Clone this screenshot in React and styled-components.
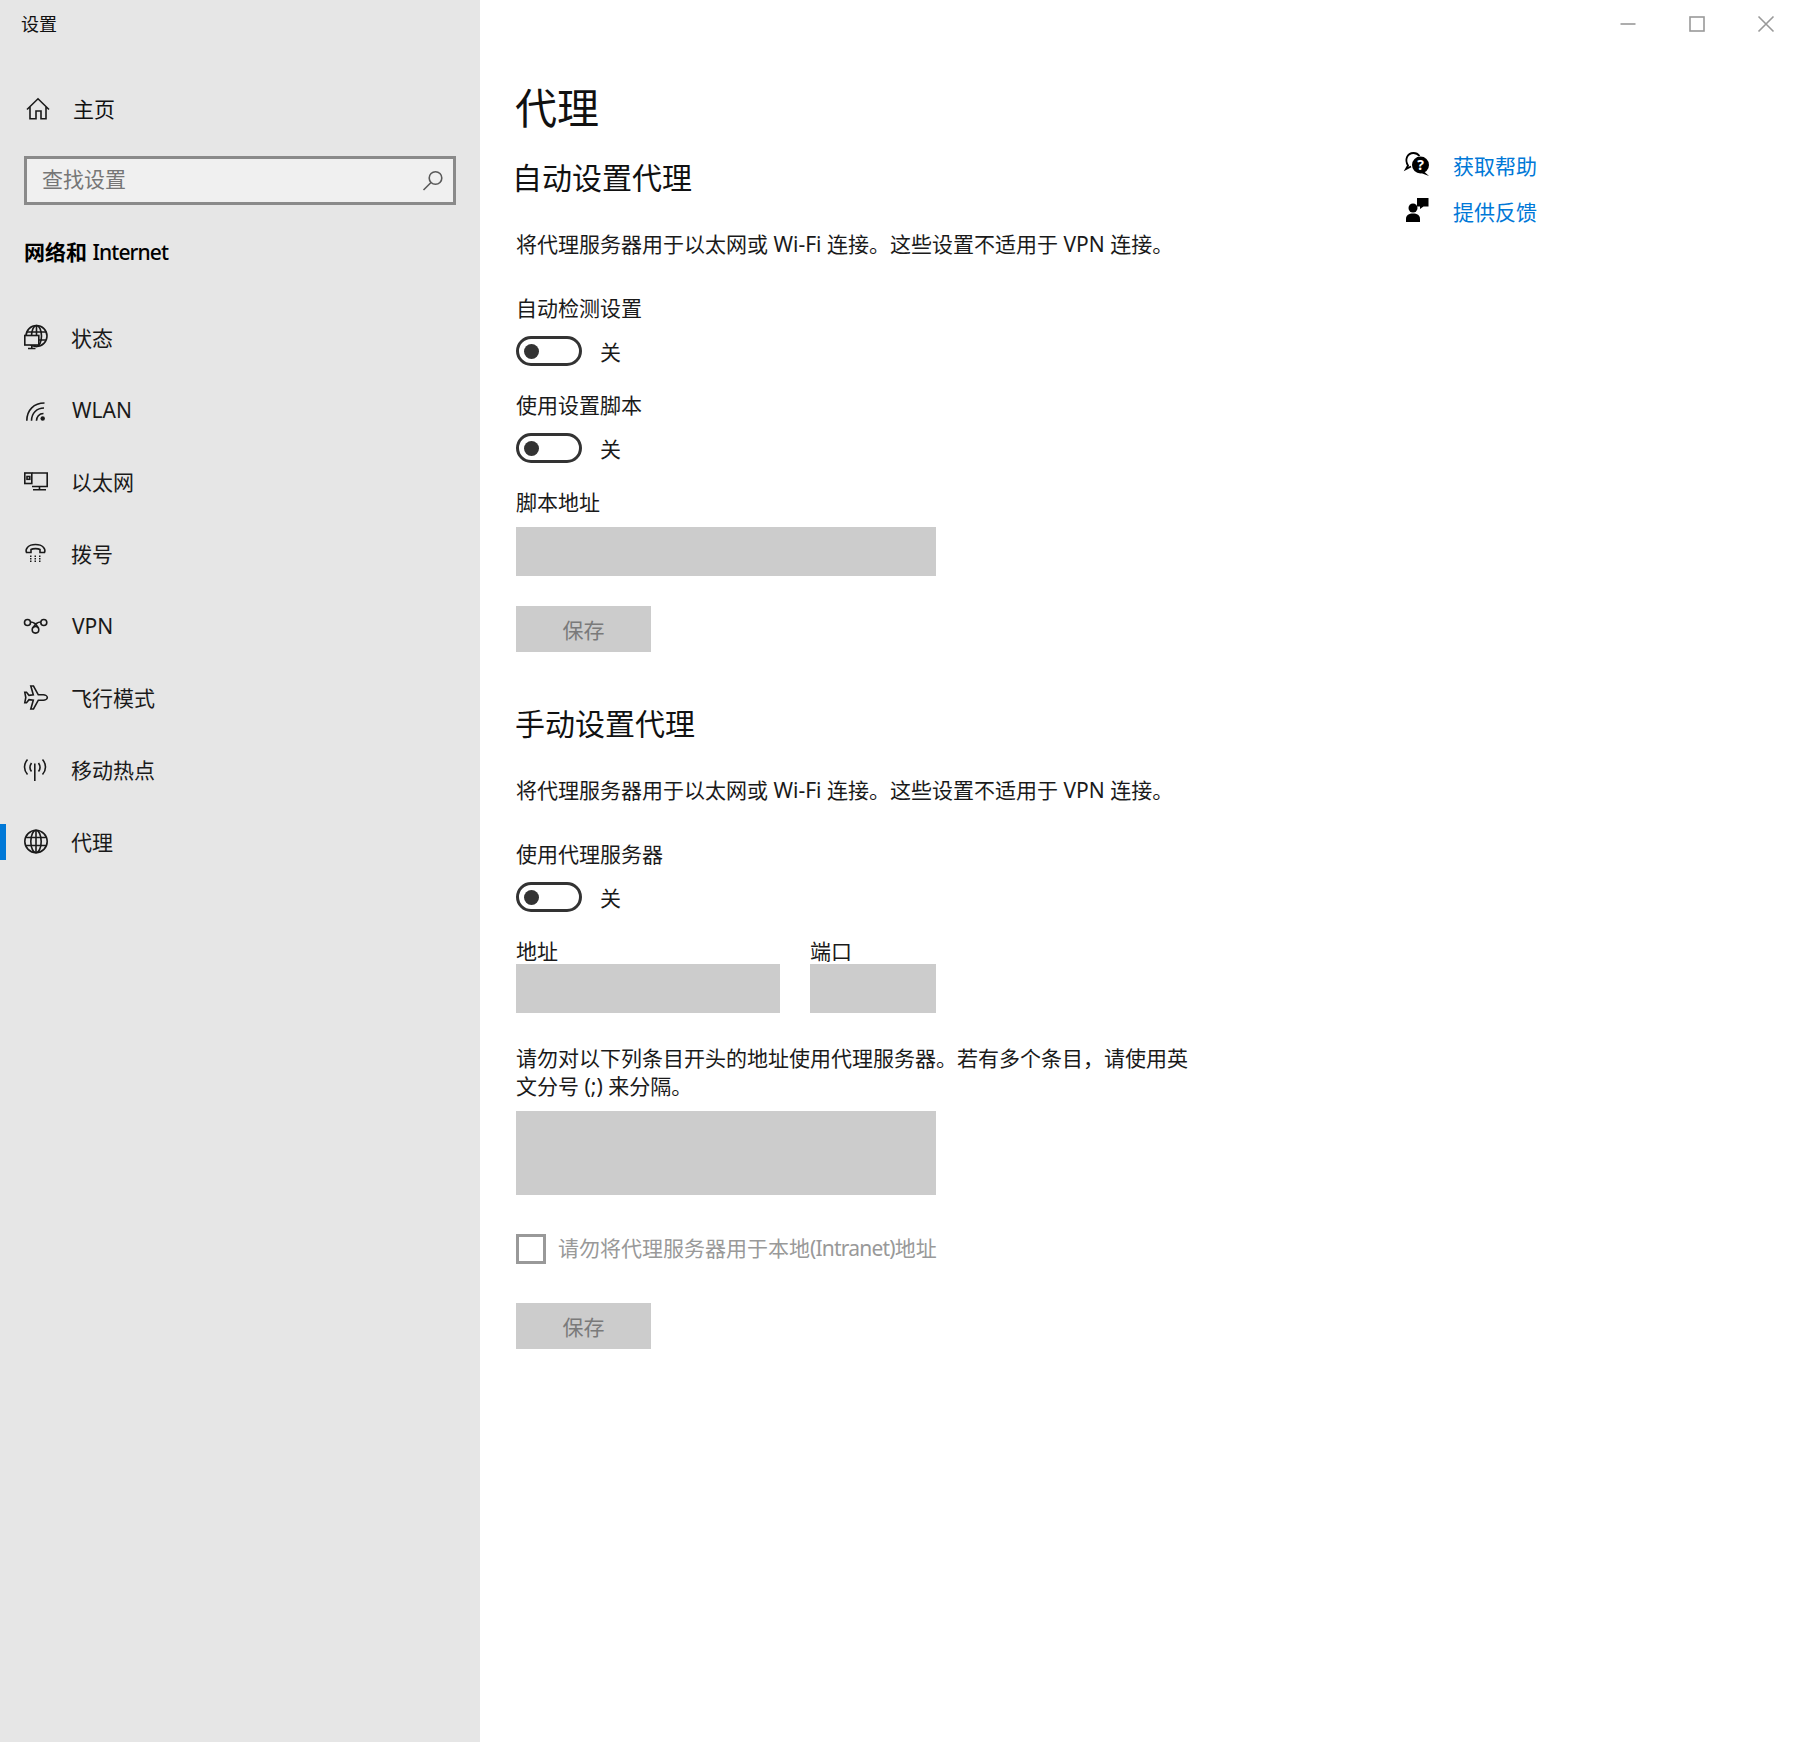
import React from 'react';
import styled, { createGlobalStyle } from 'styled-components';

const GlobalStyle = createGlobalStyle`
  html, body {
    margin: 0;
    padding: 0;
    background: #fff;
  }
  body {
    font-family: "Noto Sans", "Noto Sans CJK SC", sans-serif;
    font-size: 21px;
    color: #1a1a1a;
  }
  * {
    box-sizing: border-box;
  }
`;

const Page = styled.div`
  display: flex;
  width: 1801px;
  height: 1742px;
  overflow: hidden;
`;

const Sidebar = styled.aside`
  width: 480px;
  flex-shrink: 0;
  background: #e6e6e6;
`;

const AppTitle = styled.div`
  height: 48px;
  padding-left: 21px;
  font-size: 18px;
  line-height: 48px;
  color: #111;
`;

const HomeRow = styled.div`
  display: flex;
  align-items: center;
  gap: 24px;
  height: 48px;
  margin-top: 38px;
  padding-left: 26px;
  color: #111;
`;

const HomeLabel = styled.span`
  margin: 0 0 4px -1px;
`;

const SearchBox = styled.div`
  display: flex;
  align-items: center;
  width: 432px;
  height: 49px;
  margin: 22px 0 0 24px;
  padding: 0 8px 0 15px;
  border: 3px solid #8a8a8a;
  background: #f0f0f0;
`;

const SearchInput = styled.input`
  flex: 1;
  min-width: 0;
  border: none;
  outline: none;
  padding: 0 0 4px;
  background: transparent;
  font: inherit;
  color: #111;

  &::placeholder {
    color: #767676;
    opacity: 1;
  }
`;

const GroupTitle = styled.div`
  height: 30px;
  margin: 32px 0 0 24px;
  font-size: 21px;
  line-height: 30px;
  font-weight: 500;
  color: #000;

  b {
    font-weight: 700;
  }
`;

const NavList = styled.nav`
  margin-top: 35px;
`;

const NavItem = styled.div`
  position: relative;
  display: flex;
  align-items: center;
  gap: 24px;
  height: 72px;
  padding-left: 24px;
  color: #1a1a1a;

  ${(p) =>
    p.$active &&
    `
    &::before {
      content: "";
      position: absolute;
      left: 0;
      top: 18px;
      width: 6px;
      height: 36px;
      background: #0078d7;
    }
  `}
`;

const NavLabel = styled.span`
  margin: ${(p) => (p.$cjk ? '0 0 2px -1px' : '0')};
`;

const Latin = styled.span`
  letter-spacing: ${(p) => p.$spacing}px;
`;

const Icon = styled.svg`
  display: block;
  flex-shrink: 0;
  width: ${(p) => p.$size || 24}px;
  height: ${(p) => p.$size || 24}px;
  overflow: visible;
  fill: none;
  stroke: ${(p) => p.$color || '#1a1a1a'};
  stroke-width: 1.6;
`;

const Main = styled.main`
  flex: 1;
  min-width: 0;
  background: #fff;
`;

const WindowBar = styled.div`
  display: flex;
  justify-content: flex-end;
  height: 48px;
  padding-right: 1px;
`;

const WindowButton = styled.div`
  display: flex;
  align-items: center;
  justify-content: center;
  width: 69px;
  height: 48px;
`;

const Body = styled.div`
  display: flex;
`;

const Content = styled.div`
  width: 684px;
  margin-left: 36px;
  flex-shrink: 0;
`;

const PageTitle = styled.h1`
  margin: 30px 0 0 -1px;
  font-size: 42px;
  line-height: 60px;
  font-weight: 400;
  color: #111;
`;

const SectionTitle = styled.h2`
  margin: ${(p) => p.$top}px 0 0 ${(p) => p.$shift}px;
  font-size: 30px;
  line-height: 40px;
  font-weight: 400;
  color: #111;
`;

const Text = styled.p`
  margin: ${(p) => p.$top}px 0 0;
  line-height: ${(p) => p.$line || 29}px;
  color: #1a1a1a;
`;

const ToggleRow = styled.div`
  display: flex;
  align-items: center;
  gap: 18px;
  height: 30px;
  margin-top: 13px;
`;

const ToggleTrack = styled.div`
  display: flex;
  align-items: center;
  width: 66px;
  height: 30px;
  padding-left: 5px;
  border: 3px solid #333;
  border-radius: 15px;
`;

const ToggleKnob = styled.div`
  width: 15px;
  height: 15px;
  border-radius: 50%;
  background: #333;
`;

const Field = styled.input`
  display: block;
  width: ${(p) => p.$width}px;
  height: 49px;
  margin-top: ${(p) => p.$top || 0}px;
  border: none;
  padding: 0;
  background: #ccc;
`;

const FieldArea = styled.textarea`
  display: block;
  width: 420px;
  height: 84px;
  margin-top: 11px;
  border: none;
  padding: 0;
  resize: none;
  background: #ccc;
`;

const SaveButton = styled.button`
  display: block;
  width: 135px;
  height: 46px;
  margin-top: ${(p) => p.$top}px;
  border: none;
  padding: 0;
  background: #ccc;
  font: inherit;
  color: #7a7a7a;
`;

const FieldPair = styled.div`
  display: flex;
  gap: 30px;
  margin-top: 26px;
`;

const FieldColumn = styled.div`
  display: flex;
  flex-direction: column;
`;

const FieldLabel = styled.label`
  height: 26px;
  line-height: 26px;
  color: #1a1a1a;
`;

const CheckRow = styled.div`
  display: flex;
  align-items: center;
  gap: 12px;
  height: 30px;
  margin-top: 39px;
  color: #999;
`;

const CheckLabel = styled.span`
  margin-bottom: 4px;
`;

const CheckBox = styled.div`
  width: 30px;
  height: 30px;
  border: 3px solid #999;
`;

const HelpColumn = styled.div`
  margin: 93px 0 0 205px;
`;

const HelpRow = styled.a`
  display: flex;
  align-items: center;
  gap: 24px;
  height: 46px;
  color: #0078d7;
  text-decoration: none;
`;

const HelpLabel = styled.span`
  margin-top: 2px;
`;

const HelpIcon = styled.svg`
  display: block;
  flex-shrink: 0;
  width: 24px;
  height: 24px;
  overflow: visible;
`;

const HomeIcon = () => (
  <Icon viewBox="0 0 24 24">
    <path d="M1 11.500 12 .8l11 10.700M4 8.800v12h6V13h5v7.800h5V8.800" />
  </Icon>
);

const StatusIcon = () => (
  <Icon viewBox="0 0 24 24">
    <circle cx="12.500" cy="10" r="10.500" />
    <ellipse cx="12.500" cy="10" rx="5" ry="10.500" />
    <path d="M2.500 6h20M12.500 -.5V10M14 14h8" />
    <rect x=".8" y="9.500" width="14" height="9.500" fill="#e6e6e6" />
    <path d="M7.800 19v3M4 22.500h7.500" />
  </Icon>
);

const WifiIcon = () => (
  <Icon viewBox="0 0 24 24">
    <path d="M2.800 22.800C2.800 12 10 5 20.500 5M7.500 22.800C7.500 15 13 10 20 10M12.500 22.800C12.500 19 15 15.500 19.500 15.500" />
    <circle cx="18.700" cy="20.500" r="2.200" fill="#1a1a1a" stroke="none" />
  </Icon>
);

const EthernetIcon = () => (
  <Icon viewBox="0 0 24 24">
    <path d="M8 3h15.200v13.500H8M15.500 16.500v3M9 19.800h13" />
    <rect x=".8" y="3" width="7" height="10.500" />
    <rect x="3" y="6.500" width="2.800" height="2.800" />
  </Icon>
);

const DialIcon = () => (
  <Icon viewBox="0 0 24 24">
    <path d="M2.500 10.500C1 7 4 2.500 11.500 2.500s10.500 4.500 9 8h-4.500V7.500c-2-1.200-7-1.200-9 0v3z" />
    <g fill="#1a1a1a" stroke="none">
      <rect x="6" y="13.500" width="1.500" height="1.500" />
      <rect x="10.500" y="13.500" width="1.500" height="1.500" />
      <rect x="15" y="13.500" width="1.500" height="1.500" />
      <rect x="6" y="16" width="1.500" height="1.500" />
      <rect x="10.500" y="16" width="1.500" height="1.500" />
      <rect x="15" y="16" width="1.500" height="1.500" />
      <rect x="6" y="18.500" width="1.500" height="1.500" />
      <rect x="10.500" y="18.500" width="1.500" height="1.500" />
      <rect x="15" y="18.500" width="1.500" height="1.500" />
    </g>
  </Icon>
);

const VpnIcon = () => (
  <Icon viewBox="0 0 24 24">
    <circle cx="3.500" cy="8.500" r="3" />
    <circle cx="19.800" cy="8.500" r="3" />
    <circle cx="11.500" cy="15.800" r="3.300" />
    <path d="M6.500 8c3.500 0 5.800 2 7.800 6M16.800 8c-3.500 0-5.800 2-7.800 6" />
  </Icon>
);

const PlaneIcon = () => (
  <Icon viewBox="0 0 24 24">
    <path d="M23.300 11.500c0-1.500-2-2.700-4-2.700h-5L9.500.0H6.800l2.500 8.800-4.300.5-2.500-3H.8l1 5.200-1 5.200h1.700l2.500-3 4.300.5L6.800 23h2.700l4.800-8.800h5c2 0 4-1.200 4-2.700z" />
  </Icon>
);

const HotspotIcon = () => (
  <Icon viewBox="0 0 24 24">
    <path d="M10.800 5.500v17.500M3.500 1.500C-.5 6-.5 12 3.500 16.500M18.500 1.500c4 4.500 4 10.500 0 15M7.500 5c-2 3-2 6 0 8.500M14.500 5c2 3 2 6 0 8.500" />
  </Icon>
);

const GlobeIcon = () => (
  <Icon viewBox="0 0 24 24">
    <circle cx="12" cy="11.500" r="11.200" />
    <ellipse cx="12" cy="11.500" rx="5.200" ry="11.200" />
    <path d="M12 .3v22.400M1.800 7.500h20.400M1.800 15.500h20.400" />
  </Icon>
);

const SearchIcon = () => (
  <Icon viewBox="0 0 24 24" $color="#5a5a5a">
    <circle cx="14.500" cy="9" r="6.300" />
    <path d="M10 13.500 2.500 21" />
  </Icon>
);

const HelpBubbleIcon = () => (
  <HelpIcon viewBox="0 0 24 24">
    <path
      d="M6 14.500 1 17l2-3.500C-.5 8 2 1 8.500 1c2.500 0 4.500 1 6 3"
      fill="none"
      stroke="#000"
      strokeWidth="1.800"
    />
    <circle cx="15.500" cy="13" r="8.500" fill="#000" />
    <path d="M19 19.500 24 24l-8-3z" fill="#000" />
    <text x="15.500" y="18" textAnchor="middle" fontSize="14" fontWeight="700" fill="#fff">?</text>
  </HelpIcon>
);

const FeedbackIcon = () => (
  <HelpIcon viewBox="0 0 24 24">
    <circle cx="8" cy="10" r="4.500" fill="#000" />
    <path d="M1 24v-3c0-4 3-5.500 7-5.500s7 1.500 7 5.500v3z" fill="#000" />
    <path d="M12 0h11.500v8.500h-5L15 11V8.500h-3z" fill="#000" />
  </HelpIcon>
);

const navItems = [
  { label: '状态', icon: <StatusIcon />, cjk: true },
  { label: 'WLAN', icon: <WifiIcon /> },
  { label: '以太网', icon: <EthernetIcon />, cjk: true },
  { label: '拨号', icon: <DialIcon />, cjk: true },
  { label: 'VPN', icon: <VpnIcon /> },
  { label: '飞行模式', icon: <PlaneIcon />, cjk: true },
  { label: '移动热点', icon: <HotspotIcon />, cjk: true },
  { label: '代理', icon: <GlobeIcon />, cjk: true, active: true },
];

const Toggle = () => (
  <ToggleRow>
    <ToggleTrack>
      <ToggleKnob />
    </ToggleTrack>
    <span>关</span>
  </ToggleRow>
);

const DESCRIPTION = '将代理服务器用于以太网或 Wi-Fi 连接。这些设置不适用于 VPN 连接。';

const App = () => (
  <Page>
    <GlobalStyle />
    <Sidebar>
      <AppTitle>设置</AppTitle>
      <HomeRow>
        <HomeIcon />
        <HomeLabel>主页</HomeLabel>
      </HomeRow>
      <SearchBox>
        <SearchInput placeholder="查找设置" />
        <SearchIcon />
      </SearchBox>
      <GroupTitle>
        <b>网络和</b> <Latin $spacing={-0.9}>Internet</Latin>
      </GroupTitle>
      <NavList>
        {navItems.map((item) => (
          <NavItem key={item.label} $active={item.active}>
            {item.icon}
            <NavLabel $cjk={item.cjk}>{item.label}</NavLabel>
          </NavItem>
        ))}
      </NavList>
    </Sidebar>
    <Main>
      <WindowBar>
        <WindowButton>
          <Icon viewBox="0 0 16 16" $size={16} $color="#999">
            <path d="M.5 8h15" />
          </Icon>
        </WindowButton>
        <WindowButton>
          <Icon viewBox="0 0 16 16" $size={16} $color="#999">
            <rect x="1" y="1" width="14" height="14" />
          </Icon>
        </WindowButton>
        <WindowButton>
          <Icon viewBox="0 0 16 16" $size={16} $color="#999">
            <path d="M.5.5l15 15M15.500.5l-15 15" />
          </Icon>
        </WindowButton>
      </WindowBar>
      <Body>
        <Content>
          <PageTitle>代理</PageTitle>
          <SectionTitle $top={20} $shift={-4}>自动设置代理</SectionTitle>
          <Text $top={32}>{DESCRIPTION}</Text>
          <Text $top={35}>自动检测设置</Text>
          <Toggle />
          <Text $top={25}>使用设置脚本</Text>
          <Toggle />
          <Text $top={25}>脚本地址</Text>
          <Field disabled $width={420} $top={10} />
          <SaveButton disabled $top={30}>保存</SaveButton>

          <SectionTitle $top={52} $shift={-1}>手动设置代理</SectionTitle>
          <Text $top={32}>{DESCRIPTION}</Text>
          <Text $top={35}>使用代理服务器</Text>
          <Toggle />
          <FieldPair>
            <FieldColumn>
              <FieldLabel>地址</FieldLabel>
              <Field disabled $width={264} />
            </FieldColumn>
            <FieldColumn>
              <FieldLabel>端口</FieldLabel>
              <Field disabled $width={126} />
            </FieldColumn>
          </FieldPair>
          <Text $top={31} $line={28}>请勿对以下列条目开头的地址使用代理服务器。若有多个条目，请使用英文分号 (;) 来分隔。</Text>
          <FieldArea disabled />
          <CheckRow>
            <CheckBox />
            <CheckLabel>请勿将代理服务器用于本地<Latin $spacing={-0.8}>(Intranet)</Latin>地址</CheckLabel>
          </CheckRow>
          <SaveButton disabled $top={39}>保存</SaveButton>
        </Content>
        <HelpColumn>
          <HelpRow>
            <HelpBubbleIcon />
            <HelpLabel>获取帮助</HelpLabel>
          </HelpRow>
          <HelpRow>
            <FeedbackIcon />
            <HelpLabel>提供反馈</HelpLabel>
          </HelpRow>
        </HelpColumn>
      </Body>
    </Main>
  </Page>
);

export default App;
